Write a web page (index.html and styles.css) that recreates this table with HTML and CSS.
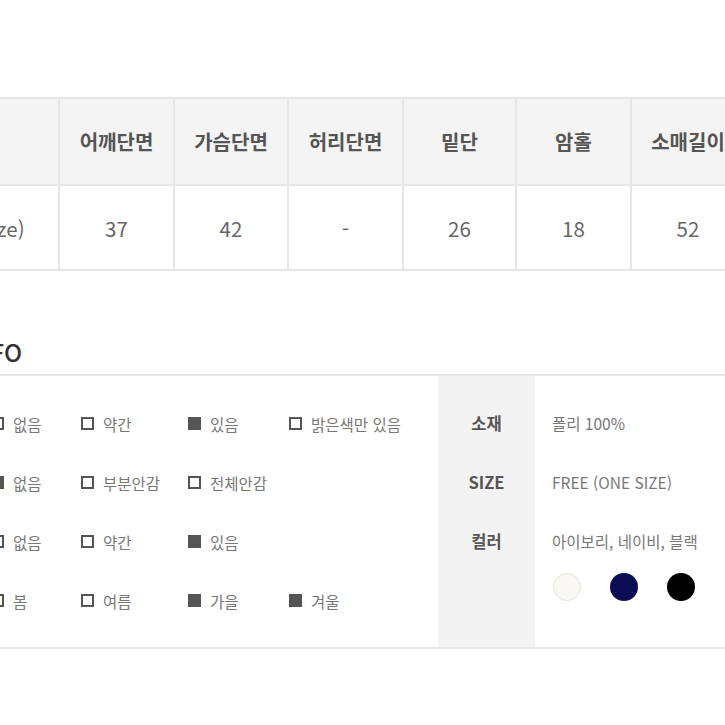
FILE: index.html
```html
<!DOCTYPE html>
<html lang="ko">
<head>
<meta charset="utf-8">
<title>Size &amp; Info</title>
<link rel="stylesheet" href="styles.css">
</head>
<body>
<div class="page">
  <table class="size-table">
    <colgroup>
      <col class="c-first"><col class="c115"><col class="c114"><col class="c115"><col class="c113"><col class="c115"><col class="c114">
    </colgroup>
    <thead>
      <tr>
        <th></th><th>어깨단면</th><th>가슴단면</th><th>허리단면</th><th>밑단</th><th>암홀</th><th>소매길이</th>
      </tr>
    </thead>
    <tbody>
      <tr>
        <td class="size-name">Free(one size)</td><td>37</td><td>42</td><td>-</td><td>26</td><td>18</td><td>52</td>
      </tr>
    </tbody>
  </table>

  <h2 class="info-title">PRODUCT INFO</h2>

  <section class="info">
    <div class="checks">
      <span class="row-label">비침</span>
      <span class="opt"><i class="box"></i>없음</span>
      <span class="opt"><i class="box"></i>약간</span>
      <span class="opt"><i class="box on"></i>있음</span>
      <span class="opt"><i class="box"></i>밝은색만 있음</span>

      <span class="row-label">안감</span>
      <span class="opt"><i class="box on"></i>없음</span>
      <span class="opt"><i class="box"></i>부분안감</span>
      <span class="opt"><i class="box"></i>전체안감</span>
      <span class="opt"></span>

      <span class="row-label">신축성</span>
      <span class="opt"><i class="box"></i>없음</span>
      <span class="opt"><i class="box"></i>약간</span>
      <span class="opt"><i class="box on"></i>있음</span>
      <span class="opt"></span>

      <span class="row-label">계절</span>
      <span class="opt"><i class="box"></i>봄</span>
      <span class="opt"><i class="box"></i>여름</span>
      <span class="opt"><i class="box on"></i>가을</span>
      <span class="opt"><i class="box on"></i>겨울</span>
    </div>
    <div class="specs">
      <div class="label first">소재</div>
      <div class="value first">폴리 100%</div>
      <div class="label">SIZE</div>
      <div class="value">FREE (ONE SIZE)</div>
      <div class="label last">컬러</div>
      <div class="value last">
        <div>아이보리, 네이비, 블랙</div>
        <div class="swatches">
          <span class="dot ivory"></span>
          <span class="dot navy"></span>
          <span class="dot black"></span>
        </div>
      </div>
    </div>
  </section>
</div>
</body>
</html>
```

FILE: styles.css
```css
html, body {
  margin: 0;
  padding: 0;
  background: #fff;
  overflow: hidden;
}
body {
  font-family: "Noto Sans CJK KR", "Noto Sans", sans-serif;
  color: #666;
}
.page {
  margin-left: -130px;
  width: 880px;
  padding-top: 97px;
}

/* size table */
.size-table {
  border-collapse: collapse;
  table-layout: fixed;
  width: 874px;
}
.c-first { width: 188px; }
.c115 { width: 115px; }
.c114 { width: 114px; }
.c113 { width: 113px; }
.size-table th,
.size-table td {
  border: 2px solid #e6e6e6;
  text-align: center;
  padding: 0;
  white-space: nowrap;
}
.size-table th {
  background: #f4f4f4;
  height: 85px;
  font-size: 20px;
  font-weight: 700;
  color: #555;
}
.size-table td {
  height: 83px;
  font-size: 20.5px;
  font-weight: 400;
  color: #666;
}
.size-table td.size-name {
  padding-right: 14px;
}

/* heading */
.info-title {
  margin: 0;
  width: 152px;
  text-align: right;
  white-space: nowrap;
  direction: rtl;
  font-size: 24px;
  font-weight: 500;
  color: #333;
  line-height: 30px;
  padding-top: 66px;
  padding-bottom: 7px;
}

/* info section */
.info {
  display: grid;
  grid-template-columns: 568px 97px 1fr;
  border-top: 2px solid #e6e6e6;
  border-bottom: 2px solid #e6e6e6;
}
.checks {
  display: grid;
  grid-template-columns: 121px 90px 107px 101px 1fr;
  grid-auto-rows: 59px;
  padding: 18px 0 17px;
  align-items: center;
}
.row-label {
  visibility: hidden;
  font-size: 15px;
}
.opt {
  display: flex;
  align-items: center;
  gap: 9px;
  font-size: 15.5px;
  color: #777;
  white-space: nowrap;
}
.box {
  display: inline-block;
  width: 9px;
  height: 9px;
  border: 2px solid #555;
  background: #fff;
  flex: none;
}
.box.on {
  background: #555;
}

.specs {
  grid-column: 2 / 4;
  display: grid;
  grid-template-columns: 97px 1fr;
  grid-template-rows: 77px 59px 1fr;
}
.label {
  background: #f3f3f3;
  text-align: center;
  font-size: 16.5px;
  font-weight: 700;
  color: #555;
  line-height: 22px;
  padding-top: 18px;
}
.label.first {
  padding-top: 36px;
}
.value {
  padding-left: 17px;
  font-size: 15.5px;
  color: #777;
  line-height: 22px;
  padding-top: 18px;
}
.value.first {
  padding-top: 36px;
}
.swatches {
  display: flex;
  gap: 29px;
  margin-top: 21px;
  padding-left: 1px;
}
.dot {
  width: 28px;
  height: 28px;
  border-radius: 50%;
  box-sizing: border-box;
}
.dot.ivory {
  background: #f9f8f4;
  border: 1.5px solid #e6e3dc;
}
.dot.navy {
  background: #0c0c55;
}
.dot.black {
  background: #000;
}
```
